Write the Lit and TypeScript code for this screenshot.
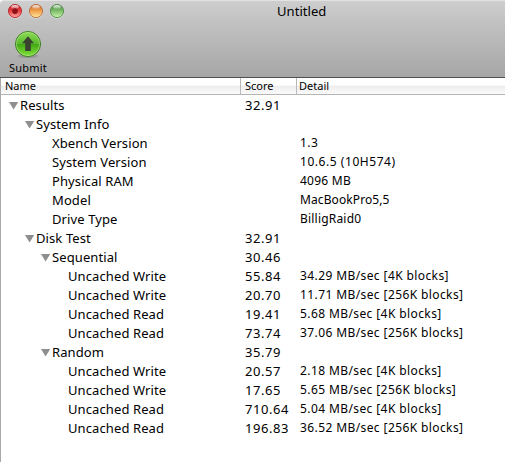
import { LitElement, html, css, svg, nothing } from "lit";
import { customElement, property } from "lit/decorators.js";

type Row = { name: string; level: number; open?: boolean; score?: string; detail?: string; tracking?: number };

const rows: Row[] = [
  { name: "Results", level: 0, open: true, score: "32.91" },
  { name: "System Info", level: 1, open: true },
  { name: "Xbench Version", level: 2, detail: "1.3", tracking: 0.4 },
  { name: "System Version", level: 2, detail: "10.6.5 (10H574)", tracking: 0.55 },
  { name: "Physical RAM", level: 2, detail: "4096 MB", tracking: 0.25 },
  { name: "Model", level: 2, detail: "MacBookPro5,5", tracking: 0.1 },
  { name: "Drive Type", level: 2, detail: "BilligRaid0", tracking: 0.2 },
  { name: "Disk Test", level: 1, open: true, score: "32.91" },
  { name: "Sequential", level: 2, open: true, score: "30.46" },
  { name: "Uncached Write", level: 3, score: "55.84", detail: "34.29 MB/sec [4K blocks]" },
  { name: "Uncached Write", level: 3, score: "20.70", detail: "11.71 MB/sec [256K blocks]" },
  { name: "Uncached Read", level: 3, score: "19.41", detail: "5.68 MB/sec [4K blocks]" },
  { name: "Uncached Read", level: 3, score: "73.74", detail: "37.06 MB/sec [256K blocks]" },
  { name: "Random", level: 2, open: true, score: "35.79" },
  { name: "Uncached Write", level: 3, score: "20.57", detail: "2.18 MB/sec [4K blocks]" },
  { name: "Uncached Write", level: 3, score: "17.65", detail: "5.65 MB/sec [256K blocks]" },
  { name: "Uncached Read", level: 3, score: "710.64", detail: "5.04 MB/sec [4K blocks]" },
  { name: "Uncached Read", level: 3, score: "196.83", detail: "36.52 MB/sec [256K blocks]" },
];

@customElement("window-light")
class WindowLight extends LitElement {
  @property() dark = "";
  @property() base = "";
  @property() glow = "";
  @property({ type: Boolean }) edited = false;

  static styles = css`
    :host { display: block; width: 16px; height: 16px; }
    svg { display: block; }
  `;

  render() {
    return html`<svg width="16" height="16" viewBox="0 0 16 16">
      <defs>
        <linearGradient id="body" x2="0" y2="1">
          <stop offset="0" stop-color=${this.dark} />
          <stop offset=".45" stop-color=${this.base} />
          <stop offset="1" stop-color=${this.glow} />
        </linearGradient>
        <linearGradient id="shine" x2="0" y2="1">
          <stop offset="0" stop-color="#fff" stop-opacity=".9" />
          <stop offset="1" stop-color="#fff" stop-opacity=".2" />
        </linearGradient>
      </defs>
      <circle cx="8" cy="8.6" r="7.2" fill="#fff" opacity=".4" />
      <circle cx="8" cy="8" r="6.6" fill="url(#body)" stroke=${this.dark} stroke-width=".9" />
      <ellipse cx="8" cy="3.9" rx="3.8" ry="1.9" fill="url(#shine)" />
      ${this.edited ? svg`<circle cx="8" cy="8.1" r="2.8" fill="#8c1218"/>` : nothing}
    </svg>`;
  }
}

@customElement("app-root")
class AppRoot extends LitElement {
  static styles = css`
    :host {
      display: flex; flex-direction: column; width: 505px; height: 462px;
      box-sizing: border-box; overflow: hidden; background: #fff; color: #000;
      font-family: "Noto Sans", "Open Sans", sans-serif; font-size: 13px; white-space: nowrap;
    }
    .chrome {
      height: 78px; box-sizing: border-box; flex: none;
      border-top: 1px solid #e2e2e2; border-bottom: 1px solid #4f4f4f;
      border-top-left-radius: 4px;
      background: linear-gradient(#cecece, #c3c3c3 25%, #a6a6a6);
    }
    .titlebar { display: grid; grid-template-columns: 277px 1fr; height: 22px; }
    .lights { display: flex; gap: 5px; padding: 2px 0 0 7px; }
    .title { line-height: 21px; letter-spacing: 0.05px; }
    .submit { display: flex; flex-direction: column; align-items: center; width: 56px; padding-top: 6px; }
    .submit svg { display: block; }
    .caption { font-size: 11px; line-height: 15px; margin-top: 1px; letter-spacing: 0.2px; }
    .columns {
      display: grid; grid-template-columns: 239px 56px 1fr;
      height: 17px; box-sizing: border-box; flex: none;
      border-bottom: 1px solid #b5b5b5; border-left: 1px solid #aaa;
      background: linear-gradient(#fff 0 45%, #ededed 50%, #fafafa);
      font-size: 11px; line-height: 16px;
    }
    .head { padding-left: 4px; border-left: 1px solid #b9b9b9; }
    .head:first-child { border-left: none; }
    .head:last-child { padding-left: 2px; }
    .table { flex: 1; border-left: 1px solid #aaa; padding-top: 1px; }
    .row { display: grid; grid-template-columns: 240px 55px 1fr; height: 19px; line-height: 19px; }
    .name { display: flex; align-items: center; padding-left: calc(7px + var(--level) * 16px); }
    .arrow { width: 12px; height: 9px; flex: none; }
    .label { letter-spacing: 0.1px; }
    .score { padding-left: 4px; letter-spacing: 0.55px; }
    .detail { padding-left: 4px; font-size: 12px; line-height: 17px; letter-spacing: calc(var(--tracking) * 1px); }
  `;

  render() {
    return html`
      <div class="chrome">
        <div class="titlebar">
          <div class="lights">
            <window-light dark="#b52a2f" base="#e5383b" glow="#ffaaa4" edited></window-light>
            <window-light dark="#b5673c" base="#f09a44" glow="#ffeaa0"></window-light>
            <window-light dark="#4c8a45" base="#79b865" glow="#ccf5ae"></window-light>
          </div>
          <div class="title">Untitled</div>
        </div>
        <div class="submit">
          <svg width="30" height="30" viewBox="0 0 30 30">
            <defs>
              <linearGradient id="green" x2="0" y2="1">
                <stop offset="0" stop-color="#8fdc58" />
                <stop offset=".48" stop-color="#59b92b" />
                <stop offset=".52" stop-color="#43a817" />
                <stop offset="1" stop-color="#83e43b" />
              </linearGradient>
            </defs>
            <ellipse cx="15" cy="27" rx="10" ry="2" fill="#777" opacity=".45" />
            <circle cx="15" cy="15" r="12.5" fill="url(#green)" stroke="#3a7d20" />
            <circle cx="15" cy="15" r="11.6" fill="none" stroke="#c8f5a0" stroke-width=".7" opacity=".7" />
            <path d="M15 7.2 21 14.2H17.8V22H12.2V14.2H9Z" fill="#39432f" />
          </svg>
          <div class="caption">Submit</div>
        </div>
      </div>
      <div class="columns">
        <div class="head">Name</div><div class="head">Score</div><div class="head">Detail</div>
      </div>
      <div class="table">
        ${rows.map((r) => html`<div class="row">
          <div class="name" style="--level:${r.level}">
            <svg class="arrow" viewBox="0 0 12 9">
              ${r.open ? svg`<path d="M1 1H10.2L5.6 8.4Z" fill="#8e8e8e"/>` : nothing}
            </svg><span class="label">${r.name}</span>
          </div>
          <div class="score">${r.score ?? ""}</div>
          <div class="detail" style="--tracking:${r.tracking ?? 0.4}">${r.detail ?? ""}</div>
        </div>`)}
      </div>`;
  }
}
